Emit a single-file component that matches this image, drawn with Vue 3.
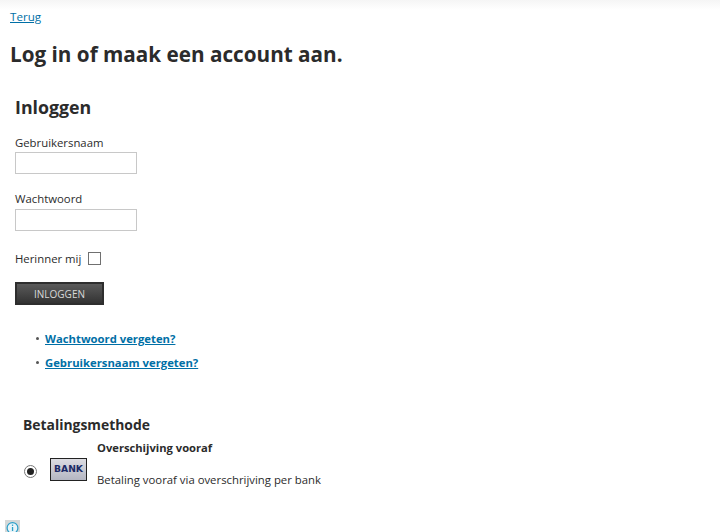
<template>
  <div class="page">
    <a class="back-link" href="#">Terug</a>
    <h1 class="page-title">Log in of maak een account aan.</h1>

    <section class="login-box">
      <h2 class="login-title">Inloggen</h2>
      <div class="field">
        <label for="username">Gebruikersnaam</label>
        <input id="username" type="text" class="text-input">
      </div>
      <div class="field">
        <label for="password">Wachtwoord</label>
        <input id="password" type="password" class="text-input">
      </div>
      <div class="remember-row">
        <label for="remember">Herinner mij</label>
        <input id="remember" type="checkbox" class="checkbox">
      </div>
      <button class="login-btn">INLOGGEN</button>
      <ul class="help-links">
        <li v-for="link in helpLinks" :key="link"><a href="#">{{ link }}</a></li>
      </ul>
    </section>

    <section class="payment">
      <h3 class="payment-title">Betalingsmethode</h3>
      <div class="payment-row">
        <span class="radio"><span class="radio-dot"></span></span>
        <span class="bank-logo">BANK</span>
        <div class="payment-text">
          <strong>Overschijving vooraf</strong>
          <p>Betaling vooraf via overschrijving per bank</p>
        </div>
      </div>
    </section>

    <div class="info-icon">
      <svg width="15" height="12" viewBox="0 0 15 12">
        <circle cx="7.5" cy="8" r="5.4" fill="#e8f4f8" stroke="#2a9fc9" stroke-width="1.2" />
        <rect x="6.9" y="7" width="1.3" height="4" fill="#2a9fc9" />
        <rect x="6.9" y="4.6" width="1.3" height="1.3" fill="#2a9fc9" />
      </svg>
    </div>
  </div>
</template>

<script setup>
const helpLinks = ['Wachtwoord vergeten?', 'Gebruikersnaam vergeten?']
</script>

<style>
html,
body {
  margin: 0;
  background: #fff;
}
</style>

<style scoped>
.page {
  box-sizing: border-box;
  height: 532px;
  overflow: hidden;
  padding: 9px 0 0 10px;
  position: relative;
  color: #2b2b2b;
  font-family: "Open Sans", "Noto Sans", sans-serif;
  font-size: 11.35px;
  background: linear-gradient(#f5f5f5, #fff 10px);
}

.back-link {
  display: block;
  width: max-content;
  color: #006fa6;
  font-size: 11.6px;
  line-height: 15px;
}

.page-title {
  margin: 14px 0 0;
  font-size: 20.7px;
  line-height: 32px;
  font-weight: 700;
}

.login-box {
  padding: 0 0 0 5px;
  margin-top: 25px;
}

.login-title {
  margin: 0;
  font-size: 17.8px;
  line-height: 24px;
  font-weight: 700;
}

.field label {
  display: block;
  line-height: 16px;
  margin-bottom: 1px;
}

.login-title + .field {
  margin-top: 16px;
}

.field + .field {
  margin-top: 17px;
}

.field + .field label {
  margin-bottom: 2px;
}

.text-input {
  display: block;
  box-sizing: border-box;
  width: 122px;
  height: 22px;
  margin: 0;
  border: 1px solid #c8c8c8;
  background: #fff;
}

.remember-row {
  display: flex;
  align-items: center;
  gap: 7px;
  margin-top: 19px;
  height: 16px;
}

.checkbox {
  appearance: none;
  box-sizing: border-box;
  width: 13px;
  height: 13px;
  margin: 0;
  border: 1px solid #707070;
  background: #fff;
}

.login-btn {
  display: block;
  box-sizing: border-box;
  width: 89px;
  height: 23px;
  margin: 16px 0 0;
  padding: 0;
  border: 2px solid #2e2e2e;
  background: linear-gradient(#5a5a5a, #333);
  color: #d8d8d8;
  font-family: "Open Sans", "Noto Sans", sans-serif;
  font-size: 10px;
}

.help-links {
  list-style: none;
  margin: 22px 0 0;
  padding: 0 0 0 30px;
  font-size: 11.3px;
  font-weight: 700;
}

.help-links li {
  position: relative;
  line-height: 24px;
}

.help-links li::before {
  content: "";
  position: absolute;
  left: -9px;
  top: 10px;
  width: 3px;
  height: 3px;
  border-radius: 50%;
  background: #555;
}

.help-links a {
  color: #006fa6;
}

.payment {
  margin: 39px 0 0 13px;
}

.payment-title {
  margin: 0;
  font-size: 13.9px;
  line-height: 22px;
  font-weight: 700;
}

.payment-row {
  display: flex;
  align-items: flex-start;
  margin-top: 4px;
}

.radio {
  display: flex;
  align-items: center;
  justify-content: center;
  box-sizing: border-box;
  width: 13px;
  height: 13px;
  margin: 25px 0 0 1px;
  border: 1px solid #777;
  border-radius: 50%;
  background: #fff;
}

.radio-dot {
  width: 7px;
  height: 7px;
  border-radius: 50%;
  background: #222;
}

.bank-logo {
  box-sizing: border-box;
  width: 37px;
  height: 23px;
  margin: 18px 0 0 13px;
  border: 1px solid #222;
  background: linear-gradient(#dcdce2, #b4b6c2);
  color: #1c2a66;
  font-family: "DejaVu Sans", sans-serif;
  font-size: 9.2px;
  font-weight: 700;
  line-height: 20px;
  text-align: center;
}

.payment-text {
  margin-left: 10px;
  line-height: 16px;
}

.payment-text strong {
  display: block;
  font-size: 11.2px;
}

.payment-text p {
  margin: 16px 0 0;
}

.info-icon {
  position: absolute;
  left: 5px;
  bottom: 0;
  width: 15px;
  height: 12px;
  overflow: hidden;
  background: #d4d8d8;
}
</style>
